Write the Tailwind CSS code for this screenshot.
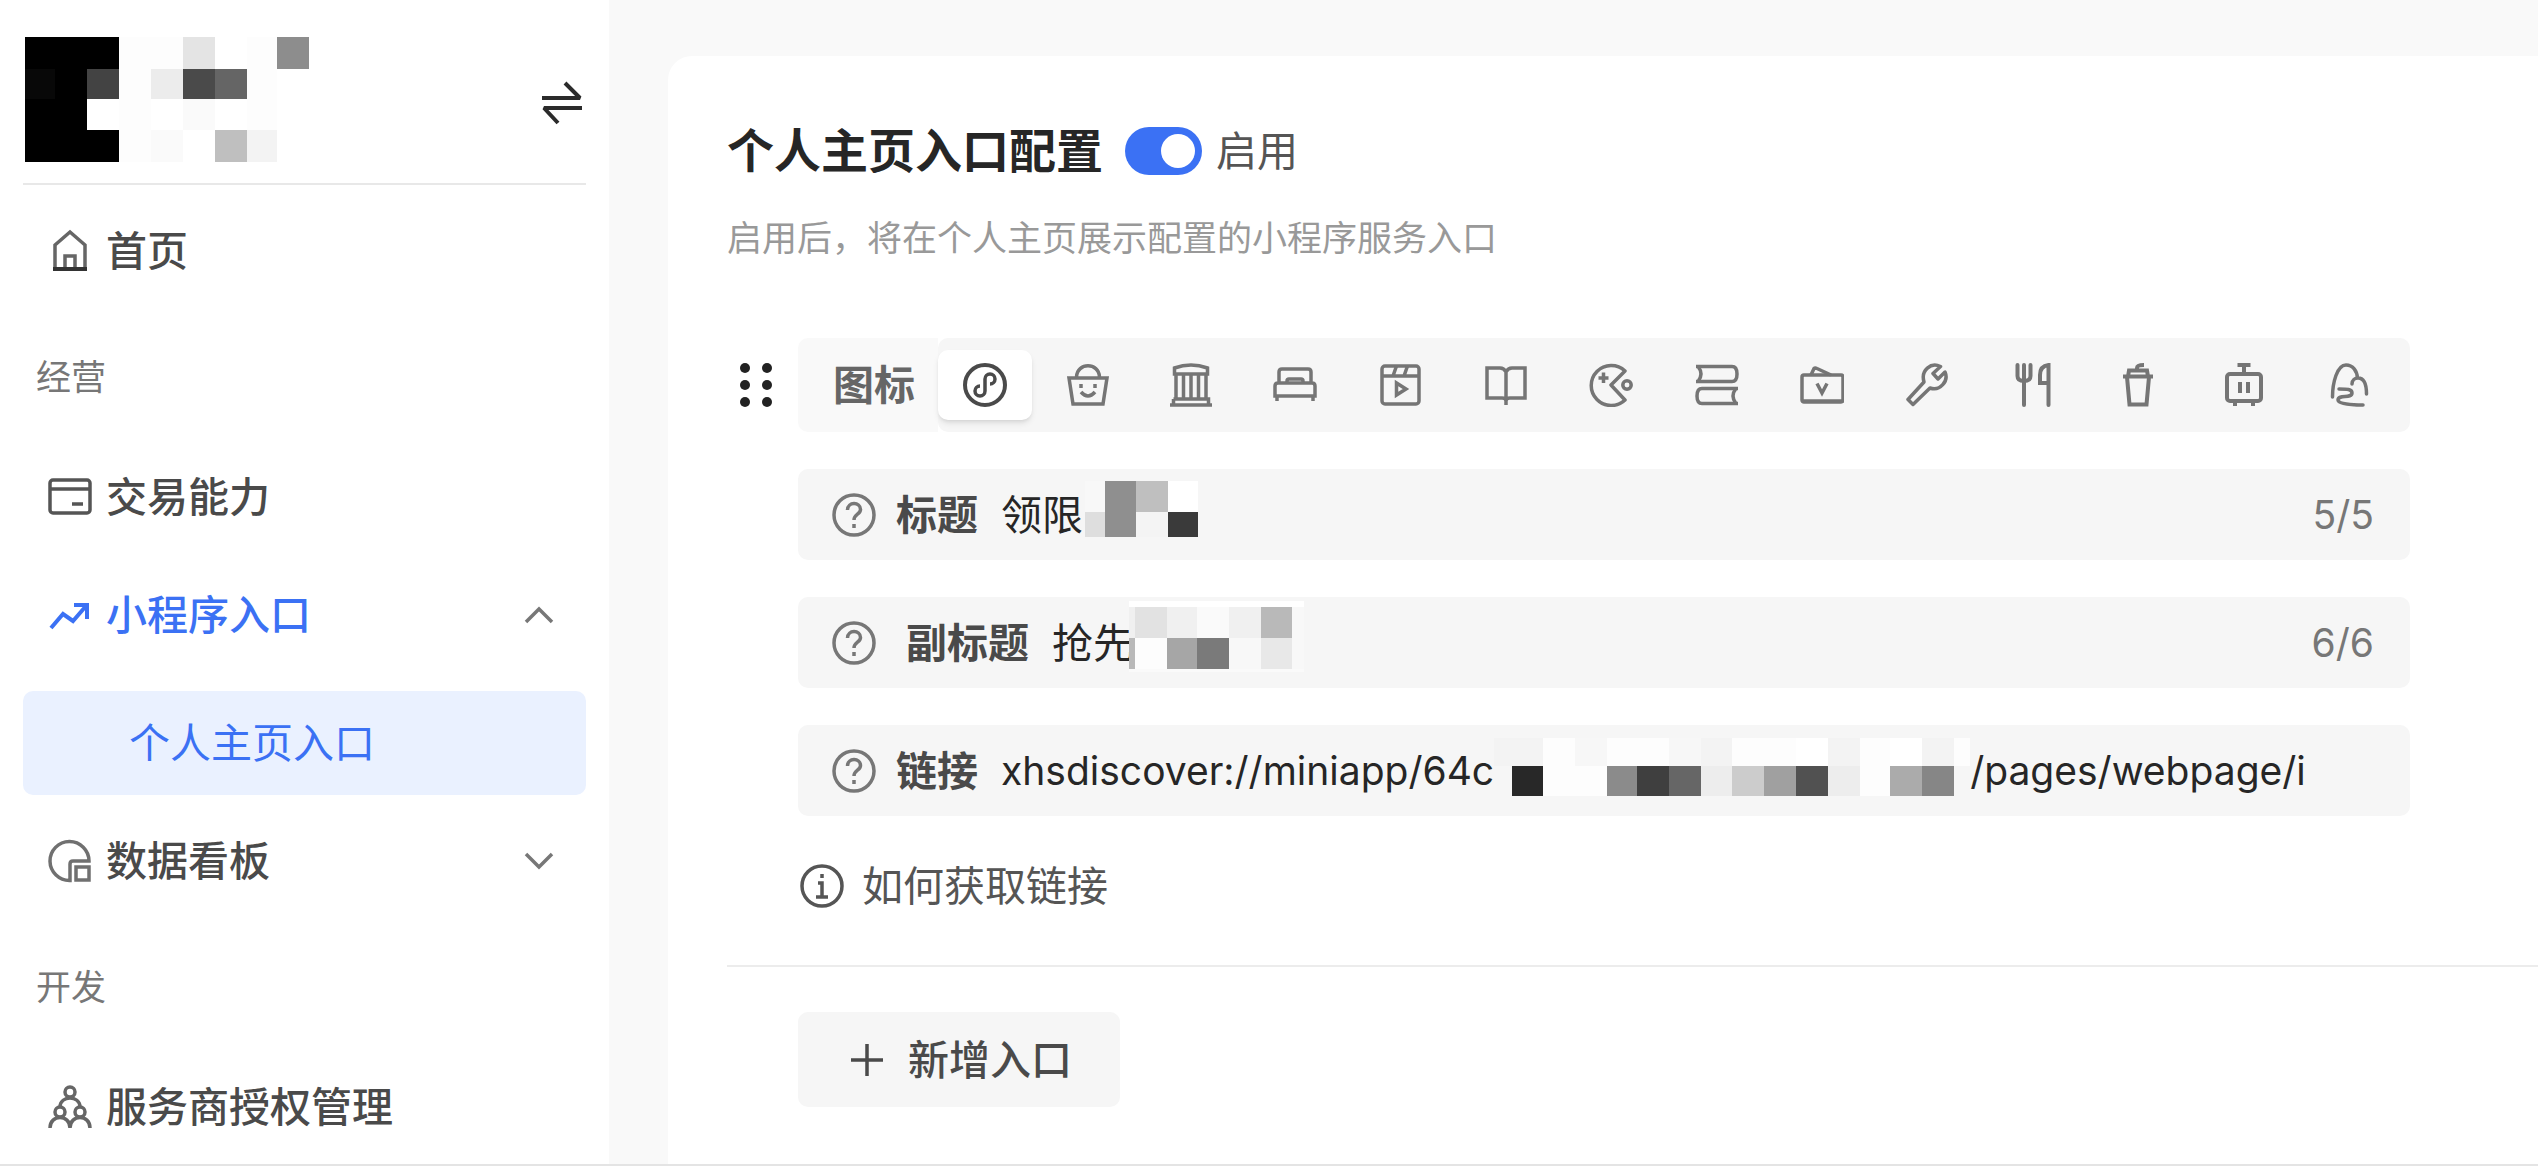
<!DOCTYPE html>
<html lang="zh-CN">
  <head>
    <meta charset="UTF-8">
    <meta name="viewport" content="width=device-width, initial-scale=1.0">
    <title>个人主页入口配置</title>
    <script src="https://cdn.jsdelivr.net/npm/@tailwindcss/browser@4"></script>
  </head>

  <body class="min-h-screen flex bg-[#f9f9f9] border-b-2 border-[#e4e4e4] font-['Inter','Noto_Sans_CJK_SC',sans-serif] text-[41px] leading-[60px] text-[#4a4a4a]">

    <!-- sidebar -->
    <aside class="w-[609px] shrink-0 bg-white px-[23px]">
      <div class="flex items-center justify-between border-b-2 border-[#e8e8e8] pt-[37px] pb-[21px] pl-[2px]">
        <svg class="w-[284px] h-[125px]" viewBox="0 0 284 125" shape-rendering="crispEdges">
          <path fill="#000" d="M0 0H94V62H62V93H94V125H0Z"/>
          <path fill="#080808" d="M0 32h30v30H0z"/>
          <path fill="#434343" d="M62 32h32v30H62z"/>
          <path fill="#fdfdfd" d="M94 0h32v125H94zM126 0h32v32h-32zM222 0h30v93h-30z"/>
          <path fill="#e4e4e4" d="M158 0h32v32h-32z"/>
          <path fill="#8d8d8d" d="M252 0h32v32h-32z"/>
          <path fill="#ececec" d="M126 32h32v30h-32z"/>
          <path fill="#4a4a4a" d="M158 32h32v30h-32z"/>
          <path fill="#656565" d="M190 32h32v30h-32z"/>
          <path fill="#fafafa" d="M158 62h32v31h-32zM126 93h32v32h-32z"/>
          <path fill="#bfbfbf" d="M190 93h32v32h-32z"/>
          <path fill="#f3f3f3" d="M222 93h30v32h-30z"/>
        </svg>
        <button type="button" aria-label="切换" class="mt-[6px] mr-[2px] text-[#2b2b2b]">
          <svg class="w-[44px] h-[44px]" viewBox="0 0 44 44" fill="none" stroke="currentColor" stroke-width="4">
            <path d="M2 17H40L25 2M42 27H4L18 42" stroke-linejoin="bevel"/>
          </svg>
        </button>
      </div>

      <nav class="flex flex-col gap-[14px] pt-[14px] font-medium">
        <a href="#" class="h-[104px] flex items-center gap-[14px] pl-[25px]">
          <svg class="w-[44px] h-[44px] text-[#666]" viewBox="0 0 44 44" fill="none" stroke="currentColor" stroke-width="3.5">
            <path d="M7 40V16L22 3L37 16V40M17 40V27H27V40"/>
            <path d="M5 40H39" stroke="#333" stroke-width="4"/>
          </svg>
          首页
        </a>

        <h2 class="h-[114px] flex items-center pt-[6px] pl-[13px] text-[35px] font-normal text-[#777]">经营</h2>

        <a href="#" class="h-[104px] flex items-center gap-[14px] pl-[25px]">
          <svg class="w-[44px] h-[44px] text-[#555]" viewBox="0 0 44 44" fill="none" stroke="currentColor" stroke-width="3.5">
            <rect x="2" y="5" width="40" height="33" rx="3"/>
            <path d="M2 14H42M24 29H35"/>
          </svg>
          交易能力
        </a>

        <button type="button" aria-expanded="true" class="h-[104px] flex items-center gap-[14px] pl-[25px] pr-[32px] text-[#3b71f4]">
          <svg class="w-[44px] h-[44px]" viewBox="0 0 44 44" fill="none" stroke="currentColor" stroke-width="4">
            <path d="M3 35L15 21L25 28L38 13M26 12H39V26"/>
          </svg>
          小程序入口
          <svg class="w-[30px] h-[18px] ml-auto text-[#777]" viewBox="0 0 30 18" fill="none" stroke="currentColor" stroke-width="3.5">
            <path d="M2 16L15 3L28 16"/>
          </svg>
        </button>

        <a href="#" aria-current="page" class="h-[104px] mt-[10px] flex items-center rounded-[10px] bg-[#eaf1ff] pl-[106px] font-normal text-[#3b71f4]">个人主页入口</a>

        <button type="button" aria-expanded="false" class="h-[104px] flex items-center gap-[14px] pl-[25px] pr-[32px]">
          <svg class="w-[44px] h-[44px] text-[#707070]" viewBox="0 0 44 44" fill="none" stroke="currentColor" stroke-width="3.5">
            <path d="M22 41.5A19.5 19.5 0 1 1 41 22H25Q22 22 22 25Z"/>
            <rect x="28" y="28" width="13" height="13"/>
          </svg>
          数据看板
          <svg class="w-[30px] h-[18px] ml-auto text-[#777]" viewBox="0 0 30 18" fill="none" stroke="currentColor" stroke-width="3.5">
            <path d="M2 2L15 15L28 2"/>
          </svg>
        </button>

        <h2 class="h-[114px] flex items-center pt-[6px] pl-[13px] text-[35px] font-normal text-[#777]">开发</h2>

        <a href="#" class="h-[104px] flex items-center gap-[14px] pl-[25px]">
          <svg class="w-[44px] h-[44px] text-[#666]" viewBox="0 0 44 44" fill="none" stroke="currentColor" stroke-width="3.5">
            <circle cx="22" cy="7" r="5"/>
            <circle cx="12" cy="27" r="5"/>
            <circle cx="32" cy="27" r="5"/>
            <path d="M12 22C12 10 32 10 32 22M2 43C2 29 22 29 22 43C22 29 42 29 42 43"/>
          </svg>
          服务商授权管理
        </a>
      </nav>
    </aside>

    <!-- content -->
    <main class="flex-1 min-w-0 pt-[56px] pl-[59px] flex">
      <section class="flex-1 min-w-0 rounded-tl-[24px] bg-white pt-[60px] pl-[59px]">
        <div class="flex items-center h-[70px]">
          <h1 class="text-[47px] font-bold text-[#262626]">个人主页入口配置</h1>
          <input id="enabled" type="checkbox" role="switch" checked class="appearance-none ml-[22px] w-[77px] h-[48px] rounded-full bg-[#ccc] checked:bg-[#3b71f4] flex items-center justify-end px-[7px] before:block before:size-[34px] before:rounded-full before:bg-white">
          <label for="enabled" class="ml-[14px] text-[#555]">启用</label>
        </div>
        <p class="mt-[22px] text-[35px] text-[#999]">启用后，将在个人主页展示配置的小程序服务入口</p>

        <div class="mt-[70px] flex items-start">
          <button type="button" aria-label="拖动排序" class="h-[94px] w-[71px] pl-[12px] shrink-0 cursor-move">
            <svg class="w-[34px] h-[46px]" viewBox="0 0 34 46" fill="#222">
              <circle cx="6" cy="6" r="5"/><circle cx="28" cy="6" r="5"/>
              <circle cx="6" cy="23" r="5"/><circle cx="28" cy="23" r="5"/>
              <circle cx="6" cy="40" r="5"/><circle cx="28" cy="40" r="5"/>
            </svg>
          </button>

          <div class="flex-1 min-w-0 mr-[128px] flex flex-col gap-[37px]">
            <!-- icon picker -->
            <div class="flex h-[94px]">
              <div class="w-[140px] shrink-0 flex items-center rounded-l-[10px] bg-[#f9f9f9] pl-[35px] font-bold text-[#666]">图标</div>
              <div class="flex-1 flex items-center rounded-[10px] bg-[#f6f6f6] pr-[14px] text-[#757575]">
                <div class="flex gap-[9px] mr-[10px]">
                  <button type="button" aria-label="小程序" aria-pressed="true" class="w-[94px] h-[70px] flex items-center justify-center rounded-[10px] bg-white shadow-md text-[#4a4a4a]">
                    <svg class="w-[44px] h-[44px]" viewBox="0 0 44 44" fill="none" stroke="currentColor" stroke-width="4">
                      <circle cx="22" cy="22" r="20"/>
                      <path d="M17 23A5 5 0 1 0 22 28V16A5 5 0 1 1 27 21" stroke-width="3.5"/>
                    </svg>
                  </button>
                  <button type="button" aria-label="购物" class="w-[94px] h-[70px] flex items-center justify-center">
                    <svg class="w-[44px] h-[44px]" viewBox="0 0 44 44" fill="none" stroke="currentColor" stroke-width="3.5">
                      <path d="M10.500 14C11 -1 33 -1 33.500 14M3 15H41L37 41H7ZM15 29Q22 37 29 29M15 21V25M29 21V25"/>
                    </svg>
                  </button>
                  <button type="button" aria-label="场馆" class="w-[94px] h-[70px] flex items-center justify-center">
                    <svg class="w-[44px] h-[44px]" viewBox="0 0 44 44" fill="none" stroke="currentColor" stroke-width="3.5">
                      <path d="M5.500 11V5Q22 -1 38.500 5V11ZM7 11V36M14.500 11V36M22 11V36M29.500 11V36M37 11V36M4.500 36H39.500V42M4.500 36V42M1 42H43"/>
                    </svg>
                  </button>
                </div>
                <div class="flex-1 flex justify-between">
                  <button type="button" aria-label="酒店" class="w-[94px] h-[70px] flex items-center justify-center">
                    <svg class="w-[44px] h-[44px]" viewBox="0 0 44 44" fill="none" stroke="currentColor" stroke-width="3.5">
                      <path d="M6 20V9Q6 6 9 6H35Q38 6 38 9V20M14 20V18Q14 16 16 16H28Q30 16 30 18V20M4 38V33H40V38M2 33V23Q2 20 5 20H39Q42 20 42 23V33Z"/>
                    </svg>
                  </button>
                  <button type="button" aria-label="影视" class="w-[94px] h-[70px] flex items-center justify-center">
                    <svg class="w-[44px] h-[44px]" viewBox="0 0 44 44" fill="none" stroke="currentColor" stroke-width="3.5">
                      <rect x="4" y="3" width="37" height="38" rx="3"/>
                      <path d="M4 13H41M18.500 3L15 13M29.500 3L26 13M18.500 20V32L28 26Z"/>
                    </svg>
                  </button>
                  <button type="button" aria-label="阅读" class="w-[94px] h-[70px] flex items-center justify-center">
                    <svg class="w-[44px] h-[44px]" viewBox="0 0 44 44" fill="none" stroke="currentColor" stroke-width="3.5">
                      <path d="M22 9Q20 5 16 5H3V35H18Q22 35 22 38Q22 35 26 35H41V5H28Q24 5 22 9V42"/>
                    </svg>
                  </button>
                  <button type="button" aria-label="游戏" class="w-[94px] h-[70px] flex items-center justify-center">
                    <svg class="w-[44px] h-[44px]" viewBox="0 0 44 44" fill="none" stroke="currentColor" stroke-width="3.5" stroke-linejoin="round">
                      <path d="M36 8A20 20 0 1 0 36 37L22 22ZM14.500 9.500V20M9.500 15H19.500"/>
                      <circle cx="38" cy="22" r="4.200"/>
                    </svg>
                  </button>
                  <button type="button" aria-label="书籍" class="w-[94px] h-[70px] flex items-center justify-center">
                    <svg class="w-[44px] h-[44px]" viewBox="0 0 44 44" fill="none" stroke="currentColor" stroke-width="3.500">
                      <path d="M1 3.500H37Q42 3.500 42 11T37 18.500H1M3 3.500Q9 11 3 18.500M43 25.500H7Q2 25.500 2 33T7 40.500H43M41 25.500Q35 33 41 40.500"/>
                    </svg>
                  </button>
                  <button type="button" aria-label="卡券" class="w-[94px] h-[70px] flex items-center justify-center">
                    <svg class="w-[44px] h-[44px]" viewBox="0 0 44 44" fill="none" stroke="currentColor" stroke-width="3.500">
                      <rect x="2" y="12" width="41" height="27" rx="2"/>
                      <path d="M11 12L14 5.500Q15 4.500 17 5.500L31 12M17 20.500L22 30L27 20.500M2 38H43"/>
                    </svg>
                  </button>
                  <button type="button" aria-label="维修" class="w-[94px] h-[70px] flex items-center justify-center">
                    <svg class="w-[44px] h-[44px]" viewBox="0 0 44 44" fill="none" stroke="currentColor" stroke-width="3.500" stroke-linejoin="round">
                      <path d="M35.500 3.500C26 -1 15.500 7 19 19L3 36.500L8 41.500L25 25C35 28.500 44 18 40 9L33 16L28 10.500Z"/>
                    </svg>
                  </button>
                  <button type="button" aria-label="餐饮" class="w-[94px] h-[70px] flex items-center justify-center">
                    <svg class="w-[44px] h-[44px]" viewBox="0 0 44 44" fill="none" stroke="currentColor" stroke-width="4" stroke-linecap="round">
                      <path d="M6.500 2V13Q6.500 18 13 18T19.500 13V2M13 2V42M37.500 42V2Q29 3 29 12V20H37.500"/>
                    </svg>
                  </button>
                  <button type="button" aria-label="饮品" class="w-[94px] h-[70px] flex items-center justify-center">
                    <svg class="w-[44px] h-[44px]" viewBox="0 0 44 44" fill="none" stroke="currentColor" stroke-width="4">
                      <path d="M7 13.500H37M12 13.500L13 7.500H31L32 13.500M11 14L13.500 41.500H30.500L33 14M21 7.500V5Q21 2 28 2"/>
                    </svg>
                  </button>
                  <button type="button" aria-label="旅行" class="w-[94px] h-[70px] flex items-center justify-center">
                    <svg class="w-[44px] h-[44px]" viewBox="0 0 44 44" fill="none" stroke="currentColor" stroke-width="4">
                      <rect x="5" y="11" width="34" height="27" rx="3"/>
                      <path d="M22 11V2M15.500 2H28.500M18 19V30M26 19V30M13 38V43M31 38V43"/>
                    </svg>
                  </button>
                  <button type="button" aria-label="景点" class="w-[94px] h-[70px] flex items-center justify-center">
                    <svg class="w-[44px] h-[44px]" viewBox="0 0 44 44" fill="none" stroke="currentColor" stroke-width="3.500" stroke-linecap="round">
                      <path d="M5.500 34C5.500 20 10 2 19 2C26 2 30 8 30.500 15M25 21C25 17 28 15 31 15C37 15 39.500 22 39.500 31M12 26C20 26 25 26 25 30C25 36 11 31 11 37C11 41 25 42 36 42"/>
                    </svg>
                  </button>
                </div>
              </div>
            </div>

            <!-- title -->
            <div class="flex items-center h-[91px] rounded-[10px] bg-[#f6f6f6] pl-[34px] pr-[36px]">
              <svg class="w-[44px] h-[44px] mr-[20px] text-[#777]" viewBox="0 0 44 44" fill="none" stroke="currentColor" stroke-width="3.5">
                <circle cx="22" cy="22" r="20"/>
                <path d="M15.500 17C15.500 8.500 28.500 8.500 28.500 16.500C28.500 21.500 22 21 22 27M22 31V35"/>
              </svg>
              <label for="title" class="mr-[23px] font-bold">标题</label>
              <input id="title" type="text" value="领限" class="field-sizing-content text-[#262626] outline-none">
              <svg class="w-[113px] h-[56px] ml-[2px] mb-[12px]" viewBox="0 0 113 56" shape-rendering="crispEdges">
                <path fill="#f8f8f8" d="M0 0h20v31H0z"/>
                <path fill="#dedede" d="M0 31h20v25H0z"/>
                <path fill="#8f8f8f" d="M20 0h31v56H20z"/>
                <path fill="#bfbfbf" d="M51 0h32v31H51z"/>
                <path fill="#f4f4f4" d="M51 31h32v25H51z"/>
                <path fill="#fff" d="M83 0h30v31H83z"/>
                <path fill="#3a3a3a" d="M83 31h30v25H83z"/>
              </svg>
              <span class="ml-auto text-[39px] text-[#777]">5/5</span>
            </div>

            <!-- subtitle -->
            <div class="flex items-center h-[91px] rounded-[10px] bg-[#f6f6f6] pl-[34px] pr-[36px]">
              <svg class="w-[44px] h-[44px] mr-[30px] text-[#777]" viewBox="0 0 44 44" fill="none" stroke="currentColor" stroke-width="3.5">
                <circle cx="22" cy="22" r="20"/>
                <path d="M15.500 17C15.500 8.500 28.500 8.500 28.500 16.500C28.500 21.500 22 21 22 27M22 31V35"/>
              </svg>
              <label for="subtitle" class="mr-[23px] font-bold">副标题</label>
              <input id="subtitle" type="text" value="抢先" class="field-sizing-content text-[#262626] outline-none">
              <svg class="w-[175px] h-[71px] -ml-[5px] mb-[12px]" viewBox="0 0 175 71" shape-rendering="crispEdges">
                <path fill="#fff" d="M0 0h175v6H0z"/>
                <path fill="#f0f0f0" d="M0 6h6v31H0zM38 6h30v31H38zM100 6h32v31h-32z"/>
                <path fill="#e2e2e2" d="M6 6h32v31H6z"/>
                <path fill="#fafafa" d="M68 6h32v31H68zM0 68h175v3H0z"/>
                <path fill="#b9b9b9" d="M132 6h31v31h-31zM0 37h6v31H0z"/>
                <path fill="#fdfdfd" d="M6 37h32v31H6z"/>
                <path fill="#a6a6a6" d="M38 37h30v31H38z"/>
                <path fill="#7a7a7a" d="M68 37h32v31H68z"/>
                <path fill="#f8f8f8" d="M100 37h32v31h-32zM163 6h12v62h-12z"/>
                <path fill="#e8e8e8" d="M132 37h31v31h-31z"/>
              </svg>
              <span class="ml-auto text-[39px] text-[#777]">6/6</span>
            </div>

            <!-- link -->
            <div class="flex items-center h-[91px] rounded-[10px] bg-[#f6f6f6] pl-[34px] pr-[36px]">
              <svg class="w-[44px] h-[44px] mr-[20px] text-[#777]" viewBox="0 0 44 44" fill="none" stroke="currentColor" stroke-width="3.5">
                <circle cx="22" cy="22" r="20"/>
                <path d="M15.500 17C15.500 8.500 28.500 8.500 28.500 16.500C28.500 21.500 22 21 22 27M22 31V35"/>
              </svg>
              <label for="link" class="mr-[23px] font-bold">链接</label>
              <input id="link" type="text" value="xhsdiscover://miniapp/64c" class="field-sizing-content text-[39px] text-[#262626] outline-none">
              <svg class="w-[476px] h-[58px] mb-[8px] shrink-0" viewBox="0 0 476 58" shape-rendering="crispEdges">
                <path fill="#f3f3f3" d="M0 0h49v28H0zM207 0h31v28h-31zM334 0h32v28h-32zM428 0h32v28h-32z"/>
                <path fill="#fdfdfd" d="M49 0h32v58H49zM81 28h32v30H81zM113 0h62v28h-62zM238 0h64v28h-64zM366 0h30v58h-30zM460 0h16v28h-16z"/>
                <path fill="#f7f7f7" d="M81 0h32v28H81zM175 0h32v28h-32z"/>
                <path fill="#fff" d="M302 0h32v28h-32zM396 0h32v28h-32z"/>
                <path fill="#282828" d="M18 28h31v30H18z"/>
                <path fill="#8b8b8b" d="M113 28h30v30h-30z"/>
                <path fill="#3f3f3f" d="M143 28h32v30h-32z"/>
                <path fill="#666" d="M175 28h32v30h-32z"/>
                <path fill="#ededed" d="M207 28h31v30h-31zM334 28h32v30h-32z"/>
                <path fill="#ccc" d="M238 28h32v30h-32z"/>
                <path fill="#a0a0a0" d="M270 28h32v30h-32z"/>
                <path fill="#515151" d="M302 28h32v30h-32z"/>
                <path fill="#ababab" d="M396 28h32v30h-32z"/>
                <path fill="#868686" d="M428 28h32v30h-32z"/>
              </svg>
              <input type="text" aria-label="链接路径" value="/pages/webpage/i" class="flex-1 min-w-0 text-[39px] text-[#262626] outline-none">
            </div>

            <a href="#" class="self-start mt-[3px] flex items-center gap-[18px] pl-[2px] text-[#555]">
              <svg class="w-[44px] h-[44px]" viewBox="0 0 44 44" fill="none" stroke="currentColor" stroke-width="3.5">
                <circle cx="22" cy="22" r="20"/>
                <path d="M22 10V14M18 19H22V33M16 33H28"/>
              </svg>
              如何获取链接
            </a>
          </div>
        </div>

        <hr class="mt-[49px] border-t-2 border-[#ececec]">

        <button type="button" class="mt-[45px] ml-[71px] w-[322px] h-[95px] flex items-center gap-[23px] rounded-[10px] bg-[#f6f6f6] pl-[51px] font-medium">
          <svg class="w-[36px] h-[36px]" viewBox="0 0 36 36" fill="none" stroke="currentColor" stroke-width="3.500">
            <path d="M18 2V34M2 18H34"/>
          </svg>
          新增入口
        </button>
      </section>
    </main>
  </body>
</html>
